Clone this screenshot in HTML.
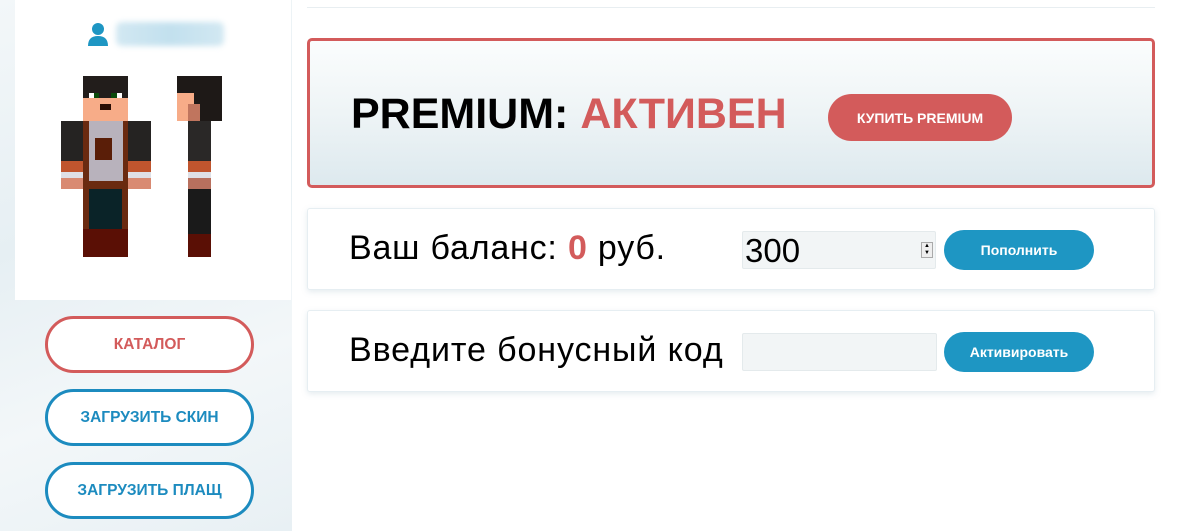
<!DOCTYPE html>
<html><head><meta charset="utf-8"><style>
*{margin:0;padding:0;box-sizing:border-box}
body{width:1194px;height:531px;overflow:hidden;background:#fff;font-family:"Liberation Sans","DejaVu Sans",sans-serif;position:relative}
.abs{position:absolute}
.side{left:0;top:0;width:292px;height:531px;background:linear-gradient(160deg,#f3f7f9,#e6eff3 40%,#f3f7f9 70%,#e8f0f4)}
.card{left:15px;top:0;width:276px;height:300px;background:#fff}
.lbtn{position:absolute;left:45px;width:209px;height:57px;border:3px solid #1c8bbf;border-radius:29px;background:#fff;color:#1c8bbf;font-weight:bold;font-size:15.5px;display:flex;align-items:center;justify-content:center}
.prem{left:307px;top:38px;width:848px;height:150px;border:3px solid #d35b5b;border-radius:5px;background:linear-gradient(180deg,#fbfdfd 0%,#eef4f6 50%,#dde9ee 100%)}
.box{left:307px;width:848px;height:82px;border:1px solid #e6eef2;border-radius:3px;background:#fff;box-shadow:0 2px 6px rgba(150,180,195,.25)}
.bt{position:absolute;background:#1e96c3;color:#fff;font-weight:bold;font-size:14px;border-radius:20px;display:flex;align-items:center;justify-content:center}
.inp{position:absolute;background:#f2f5f6;border:1px solid #e4eaec;border-radius:2px}
.big{position:absolute;font-size:34px;color:#000;white-space:nowrap}
</style></head><body>
<div class="abs side"></div>
<div class="abs card"></div>
<div class="abs" style="left:307px;top:7px;width:848px;height:1px;background:#e8eef1"></div>
<svg class="abs" style="left:88px;top:22px" width="20" height="25" viewBox="0 0 20 25"><circle cx="10" cy="7" r="6" fill="#1e96c3"/><path d="M0 24 Q0 14 10 14 Q20 14 20 24Z" fill="#1e96c3"/></svg>
<div class="abs" style="left:116px;top:22px;width:108px;height:24px;background:linear-gradient(90deg,#d2e8f2,#c2e0ee,#d2e8f2);filter:blur(3px);border-radius:6px"></div>
<svg class="abs" style="left:61px;top:76px" width="162" height="181" viewBox="0 0 162 181" shape-rendering="crispEdges">
<rect x="22" y="0" width="45" height="22" fill="#221d1b"/>
<rect x="22" y="22" width="45" height="23" fill="#f7ac88"/>
<rect x="28" y="17" width="6" height="5" fill="#fff"/><rect x="33" y="17" width="5" height="5" fill="#0b4a0b"/>
<rect x="50" y="17" width="6" height="5" fill="#0b4a0b"/><rect x="56" y="17" width="5" height="5" fill="#fff"/>
<rect x="39" y="28" width="11" height="6" fill="#2a0e05"/>
<rect x="0" y="45" width="22" height="40" fill="#252322"/>
<rect x="67" y="45" width="23" height="40" fill="#252322"/>
<rect x="0" y="85" width="22" height="28" fill="#c0552e"/><rect x="67" y="85" width="23" height="28" fill="#c0552e"/>
<rect x="0" y="96" width="22" height="6" fill="#dfe0e6"/><rect x="67" y="96" width="23" height="6" fill="#dfe0e6"/>
<rect x="0" y="102" width="22" height="11" fill="#d98a72"/><rect x="67" y="102" width="23" height="11" fill="#d98a72"/>
<rect x="22" y="45" width="45" height="68" fill="#6a2a10"/>
<rect x="28" y="45" width="34" height="60" fill="#b8b2bc"/>
<rect x="34" y="62" width="17" height="22" fill="#5a1e08"/>
<rect x="22" y="113" width="45" height="40" fill="#0a2328"/>
<rect x="22" y="113" width="6" height="40" fill="#6a2a10"/><rect x="61" y="113" width="6" height="40" fill="#6a2a10"/>
<rect x="22" y="153" width="45" height="28" fill="#5a0f05"/>
<rect x="116" y="0" width="45" height="45" fill="#1e1917"/>
<rect x="116" y="17" width="17" height="28" fill="#f7ac88"/>
<rect x="127" y="28" width="12" height="17" fill="#c0755e"/>
<rect x="127" y="45" width="23" height="40" fill="#2a2827"/>
<rect x="127" y="85" width="23" height="28" fill="#c0552e"/>
<rect x="127" y="96" width="23" height="6" fill="#dfe0e6"/>
<rect x="127" y="102" width="23" height="11" fill="#b8705e"/>
<rect x="127" y="113" width="23" height="45" fill="#1a1a1a"/>
<rect x="127" y="158" width="23" height="23" fill="#5a0f05"/>
</svg>
<div class="lbtn" style="top:316px;border-color:#d35b5b;color:#d35b5b">КАТАЛОГ</div>
<div class="lbtn" style="top:389px">ЗАГРУЗИТЬ СКИН</div>
<div class="lbtn" style="top:462px">ЗАГРУЗИТЬ ПЛАЩ</div>

<div class="abs prem">
 <div style="position:absolute;left:41px;top:49px;font-size:43px;font-weight:bold;white-space:nowrap;color:#000">PREMIUM: <span style="color:#d35b5b">АКТИВЕН</span></div>
 <div style="position:absolute;left:518px;top:53px;width:184px;height:47px;border-radius:24px;background:#d35b5b;color:#fff;font-weight:bold;font-size:14px;display:flex;align-items:center;justify-content:center">КУПИТЬ PREMIUM</div>
</div>

<div class="abs box" style="top:208px">
 <div class="big" style="left:41px;top:20px;letter-spacing:0.8px">Ваш баланс: <b style="color:#d35b5b">0</b> руб.</div>
 <div class="inp" style="left:434px;top:22px;width:194px;height:38px"><span style="position:absolute;left:2px;top:0;font-size:33px">300</span>
  <span style="position:absolute;left:178px;top:10px;width:12px;height:16px;border:1px solid #aaa;background:#eee;font-size:6px;line-height:7px;text-align:center">▲<br>▼</span></div>
 <div class="bt" style="left:636px;top:21px;width:150px;height:40px">Пополнить</div>
</div>
<div class="abs box" style="top:310px">
 <div class="big" style="left:41px;top:20px;letter-spacing:0.9px">Введите бонусный код</div>
 <div class="inp" style="left:434px;top:22px;width:195px;height:38px"></div>
 <div class="bt" style="left:636px;top:21px;width:150px;height:40px">Активировать</div>
</div>
</body></html>
